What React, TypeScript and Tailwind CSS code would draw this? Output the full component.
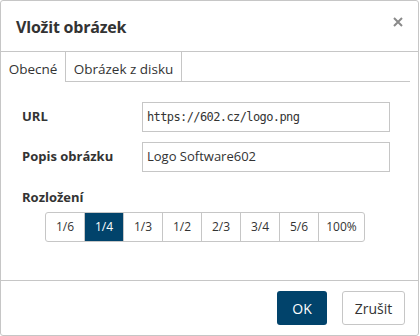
import React from "react";

const sizes = ["1/6", "1/4", "1/3", "1/2", "2/3", "3/4", "5/6", "100%"];

export default function App() {
  return (
    <div className="w-[420px] h-[336px] bg-white font-['Open_Sans',sans-serif] text-[#333]">
      <div className="w-[419px] h-[336px] border border-[#c6c6c6] rounded-[3px] flex flex-col">
        <div className="h-[51px] border-b border-[#c6c6c6] flex items-center justify-between pl-[15px] pr-[15px] shrink-0">
          <div className="text-[16px] font-bold leading-[20px] pt-[2px] tracking-[-0.2px]">Vložit obrázek</div>
          <svg width="10" height="10" viewBox="0 0 10 10" className="-mt-[8px]">
            <path d="M1 1 L9 9 M9 1 L1 9" stroke="#8a8a8a" strokeWidth="2" />
          </svg>
        </div>
        <div className="h-[30px] flex shrink-0 pr-[8px] text-[13.5px] leading-[18px]">
          <div className="w-[65px] border-r border-[#c6c6c6] flex items-center justify-center pt-[4px]">Obecné</div>
          <div className="w-[116px] border-r border-b border-[#c6c6c6] flex items-center justify-center pt-[4px]">Obrázek z disku</div>
          <div className="flex-1 border-b border-[#c6c6c6]" />
        </div>
        <div className="flex-1 pl-[21px] pt-[20px] text-[13px]">
          <div className="flex items-center h-[30px]">
            <div className="w-[120px] font-bold">URL</div>
            <div className="w-[248px] h-[30px] border border-[#c6c6c6] flex items-center pl-[4px] font-['DejaVu_Sans_Mono',monospace] text-[12px] tracking-[-0.6px]">
              https://602.cz/logo.png
            </div>
          </div>
          <div className="flex items-center h-[30px] mt-[10px]">
            <div className="w-[120px] font-bold">Popis obrázku</div>
            <div className="w-[248px] h-[30px] border border-[#c6c6c6] flex items-center pl-[4px]">
              Logo Software602
            </div>
          </div>
          <div className="font-bold mt-[17px] leading-[16px]">Rozložení</div>
          <div className="ml-[23px] mt-[7px] flex h-[30px] w-[320px] border border-[#c6c6c6] rounded-[3px] text-[12px]">
            {sizes.map((s, i) => (
              <div
                key={s}
                className={
                  (i === 7 ? "w-[45px] " : "w-[39px] border-r border-[#c6c6c6] ") +
                  (i === 1 ? "bg-[#01436b] text-white " : "") +
                  "flex items-center justify-center"
                }
              >
                {s}
              </div>
            ))}
          </div>
        </div>
        <div className="h-[55px] border-t border-[#c6c6c6] flex items-start justify-end pt-[10px] pr-[13px] gap-[15px] shrink-0 text-[14px]">
          <div className="w-[50px] h-[34px] bg-[#01436b] text-white rounded-[3px] flex items-center justify-center">OK</div>
          <div className="w-[63px] h-[34px] border border-[#c6c6c6] rounded-[3px] flex items-center justify-center">Zrušit</div>
        </div>
      </div>
    </div>
  );
}
